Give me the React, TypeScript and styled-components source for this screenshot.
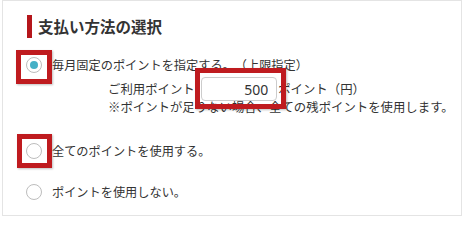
import React from "react";
import styled, { createGlobalStyle } from "styled-components";

const GlobalStyle = createGlobalStyle`
  html, body {
    margin: 0;
    padding: 0;
    background: #ffffff;
  }
  body {
    font-family: "Noto Sans CJK JP", "Noto Sans", sans-serif;
    color: #333333;
    text-spacing-trim: space-all;
  }
`;

const Panel = styled.section`
  box-sizing: border-box;
  width: 460px;
  height: 216px;
  margin-left: 2px;
  border: 1px solid #e4e4e4;
  padding: 14px 0 0 23px;
  background: #ffffff;
`;

const Heading = styled.h3`
  margin: 0 0 0 1px;
  padding-left: 6px;
  border-left: 5px solid #b5161b;
  height: 23px;
  line-height: 23px;
  font-size: 15.5px;
  font-weight: 700;
  color: #333333;
`;

const Options = styled.div`
  display: flex;
  flex-direction: column;
  margin-top: 17px;
`;

const Option = styled.div<{ $gap?: number }>`
  margin-top: ${(p) => p.$gap ?? 0}px;
`;

const Label = styled.label`
  display: flex;
  align-items: center;
  height: 20px;
  font-size: 12.2px;
  line-height: 20px;
  cursor: pointer;
`;

const RadioWrap = styled.span`
  position: relative;
  display: inline-flex;
  flex: none;
  margin-right: 10px;
`;

const Radio = styled.span<{ $checked?: boolean }>`
  box-sizing: border-box;
  width: 16px;
  height: 16px;
  border-radius: 50%;
  border: 1px solid #bdbdbd;
  background: #ffffff;
  display: flex;
  align-items: center;
  justify-content: center;

  &::after {
    content: "";
    width: 8px;
    height: 8px;
    border-radius: 50%;
    background: ${(p) => (p.$checked ? "#45b0c6" : "transparent")};
  }
`;

const Marker = styled.span<{ $w: number; $h: number; $l: number; $t: number }>`
  position: absolute;
  box-sizing: border-box;
  left: ${(p) => p.$l}px;
  top: ${(p) => p.$t}px;
  width: ${(p) => p.$w}px;
  height: ${(p) => p.$h}px;
  border: 5px solid #bf1b1f;
  box-shadow: 1px 1px 2px rgba(0, 0, 0, 0.25);
  pointer-events: none;
`;

const Detail = styled.div`
  padding-left: 82px;
  margin-top: 2px;
  font-size: 12.4px;
`;

const AmountRow = styled.div`
  display: flex;
  align-items: center;
  height: 24px;
`;

const InputWrap = styled.span`
  position: relative;
  display: inline-flex;
  margin-left: 3px;
`;

const Amount = styled.input`
  box-sizing: border-box;
  width: 76px;
  height: 24px;
  border: 1px solid #cccccc;
  border-radius: 4px;
  padding: 0 8px 0 0;
  text-align: right;
  font-family: "Noto Sans", sans-serif;
  font-size: 14px;
  color: #333333;
  background: #ffffff;
  outline: none;
`;

const Unit = styled.span`
  margin-left: 1px;
`;

const Note = styled.div`
  margin-top: -2px;
  line-height: 16px;
`;

export default function App() {
  return (
    <>
      <GlobalStyle />
      <Panel>
        <Heading>支払い方法の選択</Heading>
        <Options>
          <Option>
            <Label>
              <RadioWrap>
                <Radio $checked />
                <Marker $l={-10} $t={-7} $w={36} $h={34} />
              </RadioWrap>
              毎月固定のポイントを指定する。（上限指定）
            </Label>
            <Detail>
              <AmountRow>
                ご利用ポイント:
                <InputWrap>
                  <Amount defaultValue="500" />
                  <Marker $l={-6} $t={-9} $w={91} $h={41} />
                </InputWrap>
                <Unit>ポイント（円）</Unit>
              </AmountRow>
              <Note>※ポイントが足りない場合、全ての残ポイントを使用します。</Note>
            </Detail>
          </Option>
          <Option $gap={26}>
            <Label>
              <RadioWrap>
                <Radio />
                <Marker $l={-9} $t={-9} $w={35} $h={34} />
              </RadioWrap>
              全てのポイントを使用する。
            </Label>
          </Option>
          <Option $gap={21}>
            <Label>
              <RadioWrap>
                <Radio />
              </RadioWrap>
              ポイントを使用しない。
            </Label>
          </Option>
        </Options>
      </Panel>
    </>
  );
}
